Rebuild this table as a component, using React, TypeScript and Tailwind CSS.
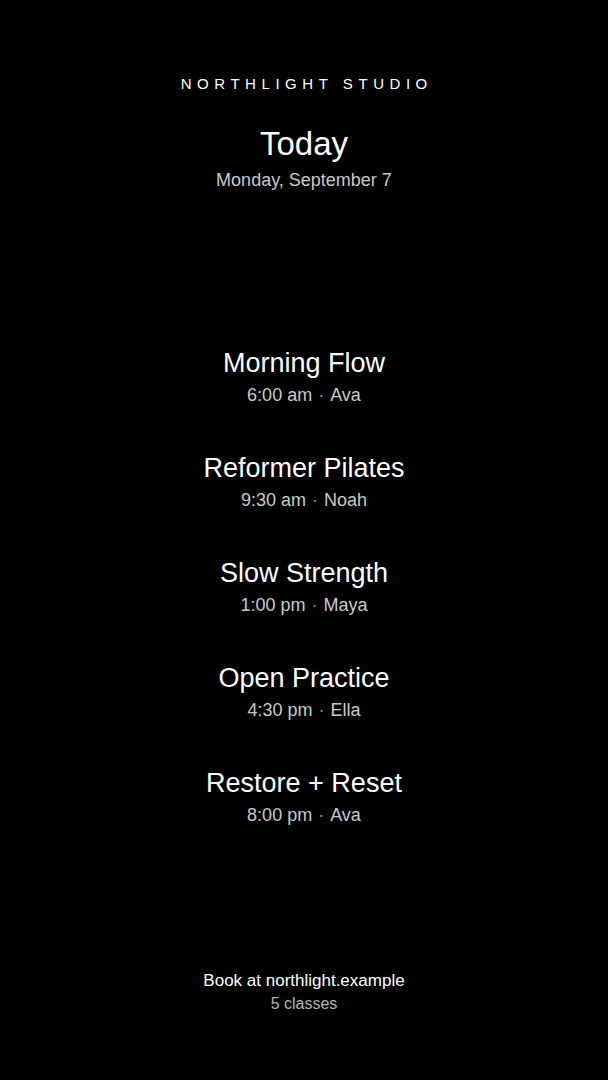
import React from "react";

type StudioClass = {
  name: string;
  time: string;
  coach: string;
};

const classes: StudioClass[] = [
  { name: "Morning Flow", time: "6:00 am", coach: "Ava" },
  { name: "Reformer Pilates", time: "9:30 am", coach: "Noah" },
  { name: "Slow Strength", time: "1:00 pm", coach: "Maya" },
  { name: "Open Practice", time: "4:30 pm", coach: "Ella" },
  { name: "Restore + Reset", time: "8:00 pm", coach: "Ava" },
];

const ClassRow: React.FC<{ item: StudioClass }> = ({ item }) => (
  <li className="flex flex-col items-center">
    <h2 className="text-[27px] leading-[32px] text-white">{item.name}</h2>
    <p className="mt-[4px] text-[18px] leading-[24px] text-[#c9c9c9]">
      {item.time}
      <span className="mx-[6px] text-[#8a8a8a]">·</span>
      {item.coach}
    </p>
  </li>
);

export default function App() {
  return (
    <div
      className="flex h-[1080px] w-full flex-col items-center bg-black text-white"
      style={{ fontFamily: '"Liberation Sans", Arial, sans-serif' }}
    >
      {/* header */}
      <header className="flex flex-col items-center pt-[74px]">
        <p className="text-[15px] leading-[20px] tracking-[0.37em] pl-[0.37em]">
          NORTHLIGHT STUDIO
        </p>
        <h1 className="mt-[30px] text-[33px] leading-[40px]">Today</h1>
        <p className="mt-[4px] text-[18px] leading-[24px] text-[#c9c9c9]">
          Monday, September 7
        </p>
      </header>

      {/* schedule */}
      <ul className="mt-[155px] flex flex-col gap-[45px]">
        {classes.map((c) => (
          <ClassRow key={c.name} item={c} />
        ))}
      </ul>

      {/* footer */}
      <footer className="mt-auto mb-[66px] flex flex-col items-center">
        <p className="text-[17px] leading-[22px] text-white">
          Book at northlight.example
        </p>
        <p className="mt-[2px] text-[16px] leading-[20px] text-[#b5b5b5]">
          {classes.length} classes
        </p>
      </footer>
    </div>
  );
}
